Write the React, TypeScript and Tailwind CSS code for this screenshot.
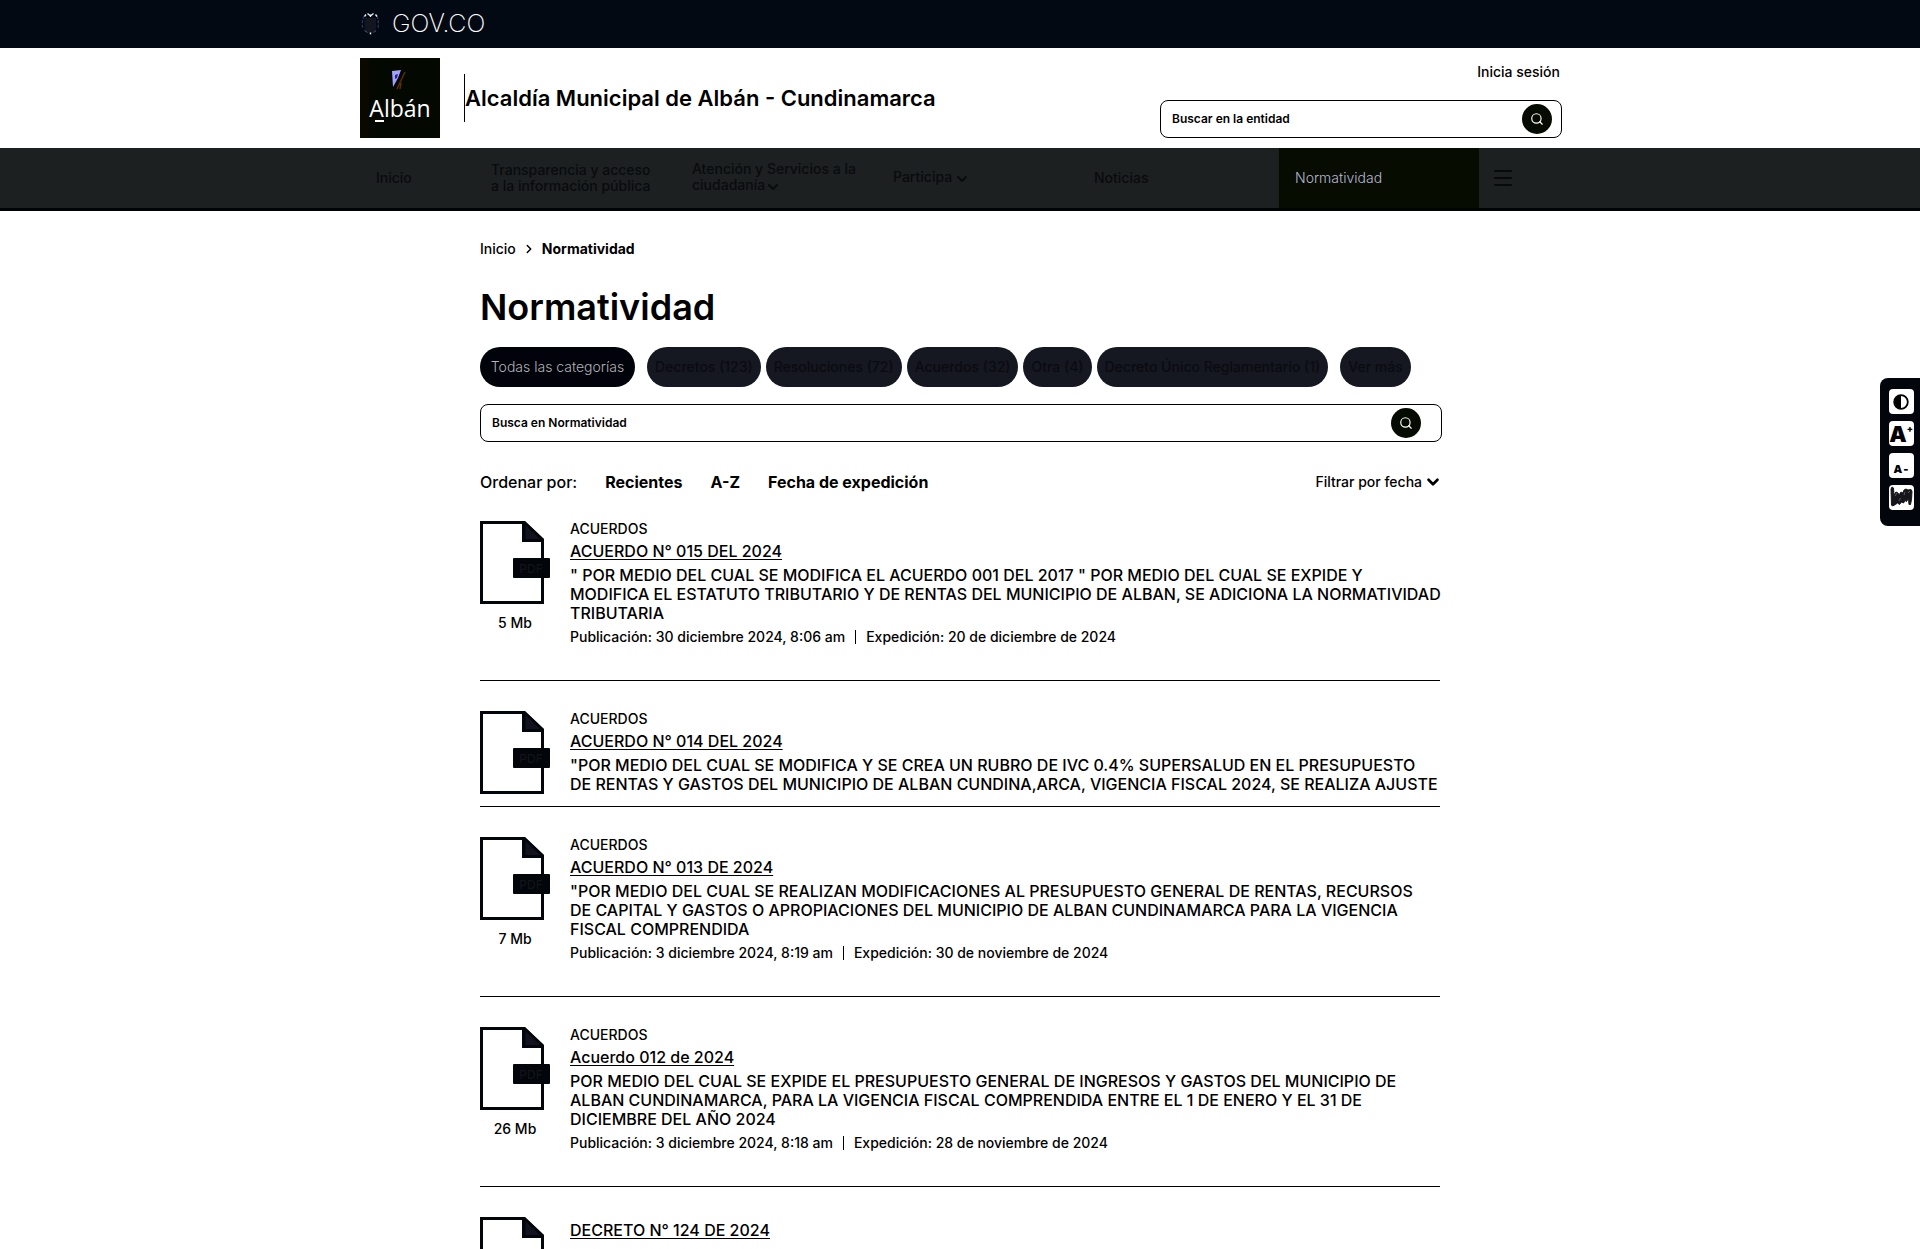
import React from "react";
import { ChevronDown, ChevronRight, Menu, Search } from "lucide-react";

type Entry = {
  category?: string;
  title: string;
  lines: string[];
  published?: string;
  issued?: string;
  size?: string;
};

const entries: Entry[] = [
  {
    category: "ACUERDOS",
    title: "ACUERDO N° 015 DEL 2024",
    lines: [
      '" POR MEDIO DEL CUAL SE MODIFICA EL ACUERDO 001 DEL 2017 " POR MEDIO DEL CUAL SE EXPIDE Y',
      "MODIFICA EL ESTATUTO TRIBUTARIO Y DE RENTAS DEL MUNICIPIO DE ALBAN, SE ADICIONA LA NORMATIVIDAD",
      "TRIBUTARIA",
    ],
    published: "Publicación: 30 diciembre 2024, 8:06 am",
    issued: "Expedición: 20 de diciembre de 2024",
    size: "5 Mb",
  },
  {
    category: "ACUERDOS",
    title: "ACUERDO N° 014 DEL 2024",
    lines: [
      '"POR MEDIO DEL CUAL SE MODIFICA Y SE CREA UN RUBRO DE IVC 0.4% SUPERSALUD EN EL PRESUPUESTO',
      "DE RENTAS Y GASTOS DEL MUNICIPIO DE ALBAN CUNDINA,ARCA, VIGENCIA FISCAL 2024, SE REALIZA AJUSTE",
    ],
  },
  {
    category: "ACUERDOS",
    title: "ACUERDO N° 013 DE 2024",
    lines: [
      '"POR MEDIO DEL CUAL SE REALIZAN MODIFICACIONES AL PRESUPUESTO GENERAL DE RENTAS, RECURSOS',
      "DE CAPITAL Y GASTOS O APROPIACIONES DEL MUNICIPIO DE ALBAN CUNDINAMARCA PARA LA VIGENCIA",
      "FISCAL COMPRENDIDA",
    ],
    published: "Publicación: 3 diciembre 2024, 8:19 am",
    issued: "Expedición: 30 de noviembre de 2024",
    size: "7 Mb",
  },
  {
    category: "ACUERDOS",
    title: "Acuerdo 012 de 2024",
    lines: [
      "POR MEDIO DEL CUAL SE EXPIDE EL PRESUPUESTO GENERAL DE INGRESOS Y GASTOS DEL MUNICIPIO DE",
      "ALBAN CUNDINAMARCA, PARA LA VIGENCIA FISCAL COMPRENDIDA ENTRE EL 1 DE ENERO Y EL 31 DE",
      "DICIEMBRE DEL AÑO 2024",
    ],
    published: "Publicación: 3 diciembre 2024, 8:18 am",
    issued: "Expedición: 28 de noviembre de 2024",
    size: "26 Mb",
  },
  { title: "DECRETO N° 124 DE 2024", lines: [] },
];

const chips = [
  "Decretos (123)",
  "Resoluciones (72)",
  "Acuerdos (32)",
  "Otra (4)",
  "Decreto Único Reglamentario (1)",
];

function Shield() {
  return (
    <svg viewBox="0 0 20 24" className="h-6 w-5" fill="none" aria-hidden="true">
      <path d="M4 4 Q1.500 9 2.500 16 M17 4 Q19 9 18 16" stroke="#343568" strokeWidth="1.2" strokeDasharray="3 1.5" />
      <path d="M4.500 6h11.500v10q-1 4-6 5q-4.500-1-5.500-5z" fill="#13161e" />
      <path
        d="M4.500 4.500 6 2.500M17 4.500 15.500 2.500M7.500 1.500l2.500 2M13.500 1.500 11 3.500M10.500 2.500V5"
        stroke="#f0f0ff"
        strokeWidth="1.300"
      />
      <path d="M4.500 18.500l3 2M16 18.500l-2.500 2" stroke="#5758a0" strokeWidth="1" />
      <path d="M10.500 20.500v1.800" stroke="#fff" strokeWidth="1.500" />
    </svg>
  );
}

function PdfFile({ labelled }: { labelled: boolean }) {
  return (
    <svg viewBox="0 0 70 84" className="block h-[84px] w-[70px]" role="img" aria-label="Archivo">
      <path d="M1.500 1.500H44L62.500 19V81.500H1.500Z" fill="#fff" stroke="#02050a" strokeWidth="3" />
      <path d="M42 0H45L64 18V21H42Z" fill="#02050a" />
      <path d="M45.500 4 60 18H45.500Z" fill="#11121d" />
      <rect x="33" y="37" width="37" height="20" rx="1" fill="#02050a" />
      {labelled && (
        <text x="51" y="51.500" textAnchor="middle" fontSize="12" fontFamily="Inter, sans-serif" fill="#11141a">
          PDF
        </text>
      )}
    </svg>
  );
}

function SearchButton({ label }: { label: string }) {
  return (
    <button
      type="submit"
      aria-label={label}
      className="flex size-[30px] shrink-0 items-center justify-center rounded-full bg-[#060b00] text-white"
    >
      <Search className="size-3.5" strokeWidth={2} />
    </button>
  );
}

function NavItem({ children, active }: { children: React.ReactNode; active?: boolean }) {
  return (
    <a
      href="#"
      className={
        active
          ? "flex w-[200px] items-center bg-[#070c00] px-4 font-light text-[#b9b6d8]"
          : "flex w-[201px] items-center px-4 text-[#090b0d]"
      }
    >
      {children}
    </a>
  );
}

export default function App() {
  return (
    <div className="h-screen overflow-hidden bg-white font-[Inter,sans-serif] text-sm font-medium text-black">
      <div className="h-12 bg-[#030912]">
        <a href="#" className="mx-auto flex h-full max-w-[1200px] items-center gap-3 text-white">
          <Shield />
          <span className="text-[25px] font-extralight">GOV.CO</span>
        </a>
      </div>

      <header className="mx-auto flex h-[100px] max-w-[1200px] items-center justify-between">
        <div className="flex items-center gap-6">
          <svg viewBox="0 0 80 80" className="size-20" role="img" aria-label="Albán">
            <rect width="80" height="80" fill="#030800" />
            <path d="M0 0h9v80H0z" fill="#0b0800" />
            <path d="M32 13 41 12 38 20 33 29Z" fill="#a3a1ff" />
            <path d="M35 17l3-1-1 4-2 1z" fill="#2a237c" />
            <path d="M45 14 37 31M41 25l-1 6" stroke="#5c2c08" strokeWidth="1.500" fill="none" />
            <text x="40" y="59" textAnchor="middle" fontSize="23" fontFamily="Open Sans, sans-serif" fill="#fff">
              Albán
            </text>
            <path d="M15 63h9" stroke="#fff" strokeWidth="2" />
          </svg>
          <div className="flex h-12 items-center border-l border-black pt-0.5 text-[22px] font-semibold">
            Alcaldía Municipal de Albán - Cundinamarca
          </div>
        </div>
        <div className="-mr-0.5 flex w-[402px] flex-col items-end gap-[18px] pt-1">
          <a href="#" className="mr-0.5 leading-5">
            Inicia sesión
          </a>
          <form className="flex h-[38px] w-full items-center rounded-lg border border-black pr-[9px] pl-[11px]">
            <input
              aria-label="Buscar en la entidad"
              placeholder="Buscar en la entidad"
              className="min-w-0 flex-1 text-xs font-semibold outline-none placeholder:text-black"
            />
            <SearchButton label="Buscar" />
          </form>
        </div>
      </header>

      <nav className="border-b-[3px] border-[#020304] bg-[#1c2021]">
        <div className="mx-auto flex h-[60px] max-w-[1200px] leading-4">
          <a href="#" className="flex w-[115px] items-center px-4 text-[#090b0d]">
            Inicio
          </a>
          <NavItem>
            <span className="whitespace-nowrap">
              Transparencia y acceso
              <br />a la información pública
            </span>
          </NavItem>
          <NavItem>
            <span className="whitespace-nowrap">
              Atención y Servicios a la
              <br />
              ciudadanía <ChevronDown className="-ml-1 inline size-4" strokeWidth={3} />
            </span>
          </NavItem>
          <NavItem>
            <span>
              Participa <ChevronDown className="-ml-0.5 inline size-4" strokeWidth={3} />
            </span>
          </NavItem>
          <NavItem>Noticias</NavItem>
          <NavItem active>Normatividad</NavItem>
          <button aria-label="Menú" className="px-3 text-[#07090b]">
            <Menu className="size-6" strokeWidth={2} />
          </button>
        </div>
      </nav>

      <main className="mx-auto max-w-[960px]">
        <div className="flex items-center gap-1.5 pt-7 leading-5">
          <a href="#">Inicio</a>
          <ChevronRight className="size-3.5" strokeWidth={2.5} />
          <span className="font-bold">Normatividad</span>
        </div>
        <h1 className="mt-[27px] text-[36px] leading-[42px] font-semibold">Normatividad</h1>

        <div className="mt-[19px] flex h-10 text-sm whitespace-nowrap">
          <button className="w-[155px] rounded-[20px] bg-[#000309] font-light text-[#b4b2ba]">
            Todas las categorías
          </button>
          <div className="mx-3 flex gap-[5px]">
            {chips.map((chip) => (
              <button key={chip} className="rounded-[20px] bg-[#151721] px-2 text-[#0a0b10]">
                {chip}
              </button>
            ))}
          </div>
          <button className="rounded-[20px] bg-[#151721] px-2 text-[#0a0b10]">Ver más</button>
        </div>

        <form className="mt-[17px] -mr-0.5 flex h-[38px] items-center rounded-lg border border-black pr-5 pl-[11px]">
          <input
            aria-label="Busca en Normatividad"
            placeholder="Busca en Normatividad"
            className="min-w-0 flex-1 text-xs font-semibold outline-none placeholder:text-black"
          />
          <SearchButton label="Buscar en Normatividad" />
        </form>

        <div className="mt-7 flex h-6 items-center justify-between">
          <div className="flex items-center gap-7 text-base">
            <span>Ordenar por:</span>
            <button className="font-bold">Recientes</button>
            <button className="font-bold">A-Z</button>
            <button className="font-bold">Fecha de expedición</button>
          </div>
          <button className="-mr-0.5 flex items-center gap-0.5">
            Filtrar por fecha
            <ChevronDown className="size-[18px]" strokeWidth={3.5} />
          </button>
        </div>

        <ul className="-mt-[3px]">
          {entries.map((entry) => (
            <li key={entry.title} className="flex min-h-[126px] gap-5 border-b border-black pt-[30px]">
              <div className="flex w-[70px] shrink-0 flex-col items-center">
                <PdfFile labelled={entry.lines.length > 0} />
                <span className="mt-2 leading-5">{entry.size}</span>
              </div>
              <div className="min-w-0">
                {entry.category && <div className="h-[17px] leading-4">{entry.category}</div>}
                <a href="#" className="block text-base leading-[26px] underline underline-offset-2">
                  {entry.title}
                </a>
                <p className="mt-0.5 text-base leading-[19px] whitespace-nowrap">
                  {entry.lines.map((line) => (
                    <span key={line} className="block">
                      {line}
                    </span>
                  ))}
                </p>
                {entry.published && (
                  <div className="mt-1 mb-[33px] flex items-center leading-5">
                    {entry.published}
                    <span className="mx-2.5 h-3.5 w-px bg-black" />
                    {entry.issued}
                  </div>
                )}
              </div>
            </li>
          ))}
        </ul>
      </main>

      <aside className="fixed top-[378px] right-0 flex h-[148px] w-10 flex-col items-center gap-[7px] rounded-l-lg bg-[#02050c] pt-[11px] pr-[6px] pl-2">
        <button aria-label="Contraste" className="flex size-[25px] shrink-0 items-center justify-center rounded bg-white">
          <svg viewBox="0 0 16 16" className="size-4">
            <circle cx="8" cy="8" r="6.800" fill="#fff" stroke="#000" strokeWidth="1.800" />
            <path d="M8 1.500v13a6.500 6.500 0 0 1 0-13z" fill="#000" />
          </svg>
        </button>
        <button aria-label="Aumentar letra" className="flex size-[25px] shrink-0 items-center justify-center rounded bg-white leading-none font-black">
          <span className="text-[22px]">A</span>
          <sup className="text-[9px]">+</sup>
        </button>
        <button aria-label="Reducir letra" className="flex size-[25px] shrink-0 items-end justify-center gap-px rounded bg-white pb-[3px] leading-none font-black">
          <span className="text-[11px]">A</span>
          <span className="text-[11px]">-</span>
        </button>
        <button aria-label="Lengua de señas" className="size-[25px] shrink-0 rounded bg-white">
          <svg viewBox="0 0 25 25" className="size-[25px]">
            <path
              d="M2 4l1-2 1.500 1 .5 7 2-3 2 1 1 2 2-3 2 1 1-3 2-1 2 1 3-.5 1 2-.5 8-1 5-1.500 0-.5-6-2 3-1.500-1-1.500 2.500-2-1-2 2.500-2-1.500-2 1.500-3 1.500-1-1z"
              fill="#16151b"
              stroke="#16151b"
              strokeWidth="1"
              strokeLinejoin="round"
            />
            <path d="M6 11l2-3M10 16l1.500-3M15 10l1-3M19 8l2-2" stroke="#8a8993" strokeWidth="0.600" fill="none" />
          </svg>
        </button>
      </aside>
    </div>
  );
}
